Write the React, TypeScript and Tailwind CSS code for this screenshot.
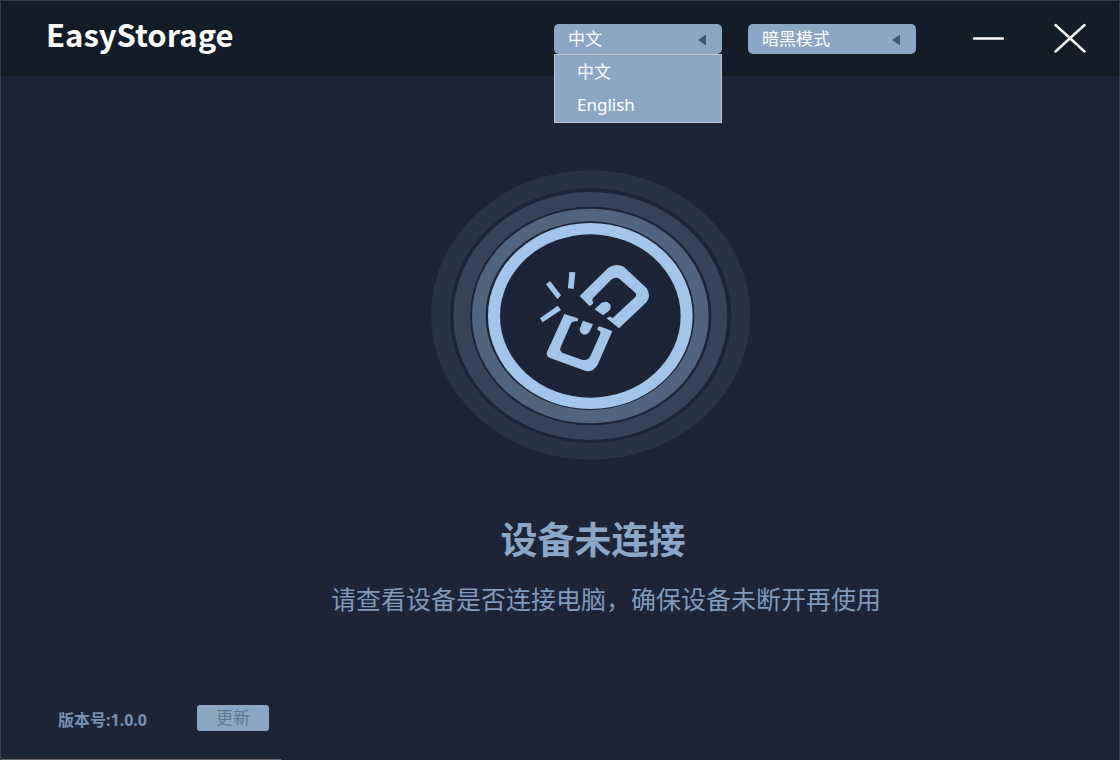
import { useState } from "react";

const languages = [
  { value: "zh", label: "中文" },
  { value: "en", label: "English" },
];

const modes = [
  { value: "dark", label: "暗黑模式" },
  { value: "light", label: "明亮模式" },
];

type Option = { value: string; label: string };

type PickerProps = {
  id: string;
  label: string;
  options: Option[];
  value: string;
  open?: boolean;
  onChange: (value: string) => void;
};

function Picker({ id, label, options, value, open = false, onChange }: PickerProps) {
  return (
    <div className="relative w-42">
      <label htmlFor={id} className="sr-only">
        {label}
      </label>
      <select
        id={id}
        value={value}
        onChange={(e) => onChange(e.target.value)}
        className="block h-[30px] w-full appearance-none rounded-[5px] bg-[#8ca7c6] px-[14px] py-0 text-[17px] leading-normal text-white outline-none"
      >
        {options.map((o) => (
          <option key={o.value} value={o.value}>
            {o.label}
          </option>
        ))}
      </select>
      <svg viewBox="0 0 8 12" className="pointer-events-none absolute top-[10px] right-4 h-3 w-2" aria-hidden="true">
        <path d="M8 0.5V11.5L0 6Z" fill="#425871" />
      </svg>
      {open && (
        <ul className="absolute top-full left-0 z-10 w-full border border-[#c0c6cd] bg-[#8ca7c6] pb-px">
          {options.map((o) => (
            <li key={o.value}>
              <button
                type="button"
                onClick={() => onChange(o.value)}
                className="block h-[33px] w-full px-[22px] text-left text-[17px] leading-[33px] text-white"
              >
                {o.label}
              </button>
            </li>
          ))}
        </ul>
      )}
    </div>
  );
}

function BrokenLink() {
  return (
    <svg viewBox="33 30 960 870" className="h-[290px] w-80" aria-hidden="true">
      <ellipse cx="512" cy="465" rx="479" ry="434" fill="#263445" />
      <ellipse cx="512" cy="467" rx="422" ry="382" fill="#1b2537" />
      <ellipse cx="511" cy="468" rx="411" ry="372" fill="#354459" />
      <ellipse cx="512" cy="468" rx="362" ry="328" fill="#1b2537" />
      <ellipse cx="511" cy="468" rx="355" ry="322" fill="#50647f" />
      <ellipse cx="510" cy="467" rx="313" ry="283" fill="#1b2537" />
      <ellipse cx="511" cy="468" rx="307" ry="279" fill="#a3c5e9" />
      <ellipse cx="511" cy="468" rx="271" ry="245" fill="#1b2537" />
      <g transform="translate(330 270)" fill="#a3c5e9">
        <path d="M149 138L235 53Q257 38 281 50L350 115Q364 138 350 156L267 235L230 205Q236 196 248 204L316 141Q322 134 314 127L268 86Q256 79 245 88L190 143Q184 149 190 157Q187 167 178 167Z" />
        <path d="M194 178L213 160Q228 150 240 162Q246 176 235 184L219 196Z" />
        <path d="M103 192L143 205Q147 211 142 214Q128 212 124 218L92 292Q88 302 97 308L155 329Q172 333 180 321L211 251Q213 243 204 241Q199 234 208 229L247 243L204 342Q192 365 170 364L60 324Q47 318 51 306Z" />
        <path d="M159 212L189 223L180 242Q170 258 157 252Q146 244 150 234Z" />
        <path d="M118 66L136 67L131 117L114 115Z" />
        <path d="M60 93L93 136L82 147L48 103Z" />
        <path d="M83 167L93 180L38 217L30 205Z" />
      </g>
    </svg>
  );
}

export default function App() {
  const [language, setLanguage] = useState("zh");
  const [mode, setMode] = useState("dark");
  const [listOpen, setListOpen] = useState(true);

  return (
    <div className="flex min-h-screen flex-col border border-b-0 border-[#354153] bg-[#1b2537] font-['Noto_Sans','Noto_Sans_CJK_SC',sans-serif]">
      <header className="flex h-[75px] items-center justify-between bg-[#131c29] pr-[33px] pl-[45px]">
        <h1 className="pb-[10px] font-['Noto_Sans_CJK_SC',sans-serif] text-[31px] leading-10 font-bold text-white">
          EasyStorage
        </h1>
        <div className="flex items-center">
          <div className="flex gap-[26px]">
            <Picker
              id="language"
              label="语言"
              options={languages}
              value={language}
              open={listOpen}
              onChange={(v) => {
                setLanguage(v);
                setListOpen(false);
              }}
            />
            <Picker id="mode" label="模式" options={modes} value={mode} onChange={setMode} />
          </div>
          <button type="button" aria-label="最小化" className="ml-14 flex h-8 w-8 items-center justify-center">
            <svg viewBox="0 0 32 32" className="h-8 w-8" stroke="#fff" strokeWidth="2.4" strokeLinecap="round">
              <path d="M2 15.5H31" />
            </svg>
          </button>
          <button type="button" aria-label="关闭" className="ml-[50px] flex h-8 w-8 items-center justify-center">
            <svg viewBox="0 0 32 32" className="h-8 w-8" stroke="#fff" strokeWidth="2.4" strokeLinecap="round">
              <path d="M1.5 2L30.5 28.5M30.5 2L1.5 28.5" />
            </svg>
          </button>
        </div>
      </header>

      <main className="flex flex-1 flex-col items-center pt-[94px] pl-[62px] text-[#8ca7c6]">
        <BrokenLink />
        <h2 className="mt-[52px] pl-1 text-[37px] leading-[56px] font-bold">设备未连接</h2>
        <p className="mt-[11px] pl-[30px] text-[25px] leading-10 font-normal text-[#7f9abb]">
          请查看设备是否连接电脑，确保设备未断开再使用
        </p>
      </main>

      <footer>
        <div className="flex items-center gap-[50px] pb-[27px] pl-[57px]">
          <p className="pt-1 text-[16px] leading-6 font-bold text-[#7690b0]">版本号:1.0.0</p>
          <button
            type="button"
            className="h-[26px] w-18 rounded-[3px] bg-[#8ca7c6] text-[17px] leading-[26px] text-[#5f7894]"
          >
            更新
          </button>
        </div>
        <div className="h-px w-1/4 bg-[#6c6a70]" />
      </footer>
    </div>
  );
}
